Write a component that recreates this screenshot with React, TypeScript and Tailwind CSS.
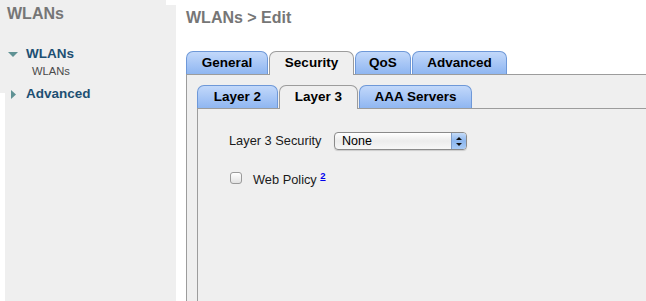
import React from "react"

const font = "font-['Liberation_Sans',Arial,sans-serif]"

function Tab({ label, active, width }: { label: string; active?: boolean; width: string }) {
  return (
    <div
      className={`${width} shrink-0 rounded-t-[7px] border border-b-0 text-center text-[13.5px] font-bold text-black ${
        active
          ? "relative z-10 -mb-px h-[24px] border-[#9c9c9c] bg-[#efefef] leading-[22px]"
          : "h-[23px] border-[#6e98d8] bg-gradient-to-b from-[#c2d8fa] to-[#8fb6f1] leading-[22px]"
      }`}
    >
      {label}
    </div>
  )
}

function Select() {
  return (
    <div className="flex h-[18px] w-[133px] overflow-hidden rounded-[4px] border border-[#8a8a8a] bg-gradient-to-b from-white via-[#ececec] to-[#f7f7f7] shadow-[0_1px_1px_rgba(0,0,0,0.15)]">
      <div className="flex-1 pl-[7px] text-[12.5px] leading-[16px] text-black">None</div>
      <div className="flex w-[15px] flex-col items-center justify-center gap-[3px] border-l border-[#7d9cc8] bg-gradient-to-b from-[#c4dbf8] via-[#8cb6ee] to-[#a9cbf5]">
        <svg width="6" height="3" viewBox="0 0 6 3">
          <path d="M0 3 L3 0 L6 3 Z" fill="#111" />
        </svg>
        <svg width="6" height="3" viewBox="0 0 6 3">
          <path d="M0 0 L6 0 L3 3 Z" fill="#111" />
        </svg>
      </div>
    </div>
  )
}

export default function App() {
  return (
    <div className={`flex h-[301px] w-[646px] overflow-hidden bg-white ${font}`}>
      {/* Sidebar */}
      <aside className="grid h-full w-[176px] shrink-0 grid-cols-1 grid-rows-1">
        <div className="[grid-area:1/1] ml-[5px] mt-[5px] bg-[#efefef]" />
        <div className="[grid-area:1/1] h-[93px] w-[166px] self-start bg-[#efefef]" />
        <div className="[grid-area:1/1] pl-[7px] pt-[4px]">
          <div className="text-[16px] font-bold leading-[20px] text-[#767676]">WLANs</div>
          <div className="mt-[22px] flex items-center">
            <div className="flex w-[19px] justify-start pl-[1px]">
              <svg width="10" height="5" viewBox="0 0 10 5">
                <path d="M0 0 L10 0 L5 5 Z" fill="#5f9294" />
              </svg>
            </div>
            <span className="text-[13.5px] font-bold leading-[16px] text-[#1d4f73]">WLANs</span>
          </div>
          <div className="mt-[2px] pl-[25px] text-[11.2px] leading-[14px] text-[#4a4a4a]">WLANs</div>
          <div className="mt-[8px] flex items-center">
            <div className="flex w-[19px] justify-start pl-[4px]">
              <svg width="5" height="9" viewBox="0 0 5 9">
                <path d="M0 0 L5 4.5 L0 9 Z" fill="#5f9294" />
              </svg>
            </div>
            <span className="text-[13.5px] font-bold leading-[16px] text-[#1d4f73]">Advanced</span>
          </div>
        </div>
      </aside>

      {/* Main */}
      <main className="flex min-w-0 flex-1 flex-col pl-[10px] pt-[8px]">
        <h1 className="text-[16px] font-bold leading-[20px] text-[#767676]">WLANs &gt; Edit</h1>

        <div className="mt-[23px] flex items-start gap-px">
          <Tab label="General" width="w-[82px]" />
          <Tab label="Security" width="w-[85px]" active />
          <Tab label="QoS" width="w-[56px]" />
          <Tab label="Advanced" width="w-[95px]" />
        </div>

        <div className="flex w-[520px] flex-1 flex-col border-l border-t border-[#9c9c9c] bg-[#efefef] pl-[10px] pt-[10px]">
          <div className="flex items-start gap-px">
            <Tab label="Layer 2" width="w-[81px]" />
            <Tab label="Layer 3" width="w-[79px]" active />
            <Tab label="AAA Servers" width="w-[113px]" />
          </div>

          <div className="flex-1 border-l border-t border-[#9c9c9c] bg-[#efefef] pl-[31px] pt-[23px] text-[#1a1a1a]">
            <div className="flex items-center">
              <span className="w-[105px] text-[12.8px] leading-[16px]">Layer 3 Security</span>
              <Select />
            </div>
            <div className="mt-[18px] flex items-center pl-[1px]">
              <div className="h-[12px] w-[12px] rounded-[3px] border border-[#9a9a9a] bg-gradient-to-b from-white to-[#e2e2e2]" />
              <span className="ml-[11px] text-[12.8px] leading-[16px]">
                Web Policy{" "}
                <a className="align-super text-[9.5px] font-bold text-[#0000ee] underline">2</a>
              </span>
            </div>
          </div>
        </div>
      </main>
    </div>
  )
}
